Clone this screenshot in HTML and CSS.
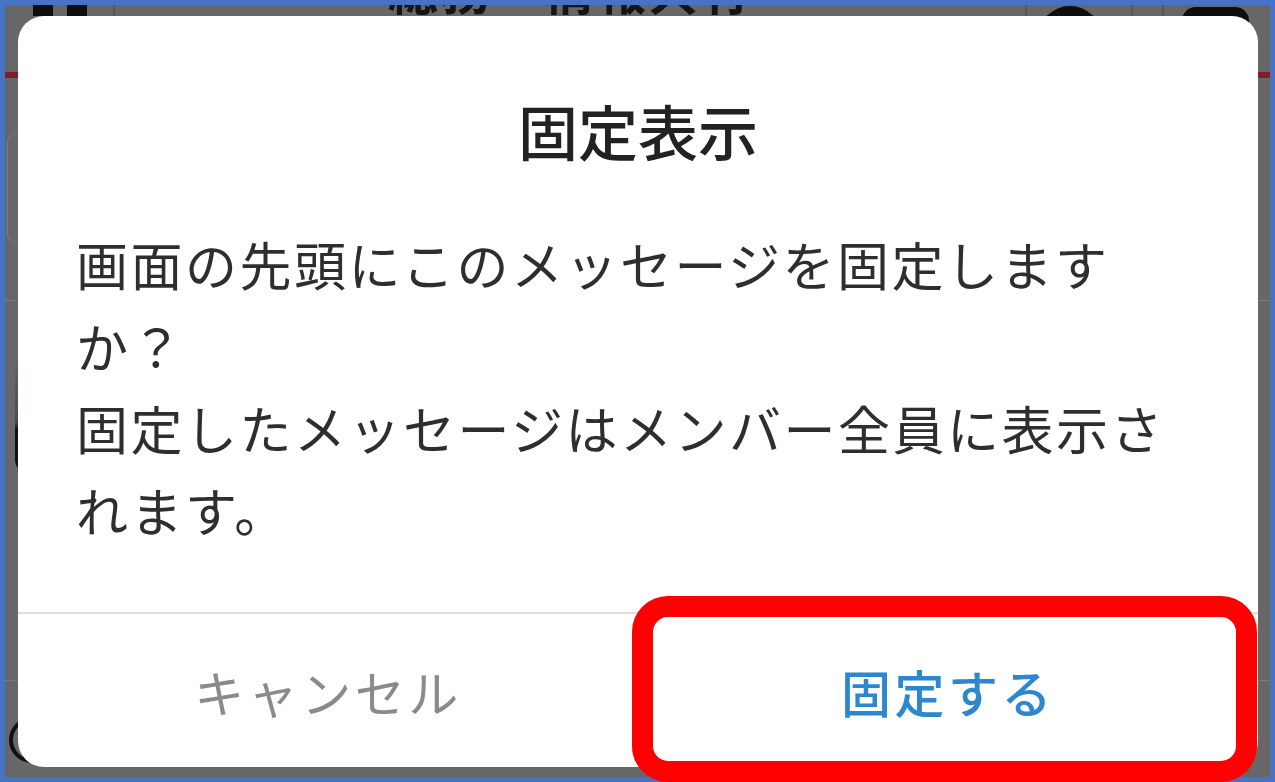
FILE: index.html
```html
<!DOCTYPE html>
<html lang="ja">
<head>
<meta charset="utf-8">
<title>固定表示</title>
<link rel="stylesheet" href="styles.css">
</head>
<body>
<div class="frame">
  <div class="backdrop">
    <div class="bd-icon bd-icon-a"></div>
    <div class="bd-icon bd-icon-b"></div>
    <div class="bd-vline bd-v1"></div>
    <div class="bd-vline bd-v2"></div>
    <div class="bd-vline bd-v3"></div>
    <div class="bd-vline bd-v4"></div>
    <div class="bd-heading">総務・情報共有</div>
    <div class="bd-dome"></div>
    <div class="bd-pill"></div>
    <div class="bd-redline"></div>
    <div class="bd-card"></div>
    <div class="bd-hline bd-h1"></div>
    <div class="bd-hline bd-h2"></div>
    <div class="bd-photo"></div>
    <div class="bd-ring"></div>
  </div>
  <div class="dialog">
    <h2 class="title">固定表示</h2>
    <p class="message">画面の先頭にこのメッセージを固定しますか？<br>固定したメッセージはメンバー全員に表示されます。</p>
    <div class="actions">
      <button class="btn btn-cancel" type="button">キャンセル</button>
      <button class="btn btn-confirm" type="button">固定する</button>
    </div>
  </div>
  <div class="highlight"></div>
</div>
</body>
</html>
```
FILE: styles.css
```css
* { box-sizing: border-box; }
html, body { margin: 0; padding: 0; }
body {
  width: 1275px;
  height: 782px;
  overflow: hidden;
  font-family: "Noto Sans CJK JP", "Noto Sans", sans-serif;
  background: #4673c6;
}
.frame {
  position: relative;
  width: 1275px;
  height: 782px;
  border: 5px solid #4673c6;
  background: #676767;
  padding: 11px 12px 10px 13px;
  display: flex;
  flex-direction: column;
}

/* dimmed app behind the dialog */
.backdrop {
  position: absolute;
  inset: 0;
  overflow: hidden;
}
.bd-icon {
  position: absolute;
  top: 0;
  width: 20px;
  height: 11px;
  background: #0e0e0e;
}
.bd-icon-a { left: 28px; }
.bd-icon-b { left: 62px; }
.bd-vline {
  position: absolute;
  top: 0;
  width: 2px;
  height: 11px;
  background: #575757;
}
.bd-v1 { left: 108px; }
.bd-v2 { left: 1020px; }
.bd-v3 { left: 1126px; }
.bd-v4 { left: 1157px; }
.bd-heading {
  position: absolute;
  left: 383px;
  top: -42px;
  font-size: 50px;
  line-height: 50px;
  letter-spacing: 2px;
  color: #151515;
  font-weight: 700;
}
.bd-dome {
  position: absolute;
  left: 1033px;
  top: 1px;
  width: 64px;
  height: 64px;
  border-radius: 50%;
  background: #0e0e0e;
}
.bd-pill {
  position: absolute;
  left: 1177px;
  top: 2px;
  width: 67px;
  height: 30px;
  border-radius: 14px;
  background: #0e0e0e;
}
.bd-redline {
  position: absolute;
  left: 0;
  right: 0;
  top: 67px;
  height: 6px;
  background: #7b1f2a;
}
.bd-card {
  position: absolute;
  left: 2px;
  top: 128px;
  width: 60px;
  height: 110px;
  border: 1px solid #7d7d7d;
  border-radius: 10px;
}
.bd-hline {
  position: absolute;
  left: 0;
  right: 0;
  height: 1px;
  background: #7a7a7a;
}
.bd-h1 { top: 295px; }
.bd-h2 { top: 675px; }
.bd-photo {
  position: absolute;
  left: 10px;
  top: 355px;
  width: 60px;
  height: 112px;
  border-radius: 12px;
  background: linear-gradient(#5c6472 0%, #454d5b 55%, #121212 62%, #121212 100%);
}
.bd-ring {
  position: absolute;
  left: 4px;
  top: 712px;
  width: 46px;
  height: 46px;
  border: 4px solid #111;
  border-radius: 50%;
}

/* dialog */
.dialog {
  position: relative;
  z-index: 1;
  flex: 1;
  background: #ffffff;
  border-radius: 26px;
  display: flex;
  flex-direction: column;
  overflow: hidden;
}
.title {
  margin: 0;
  padding-top: 74px;
  text-align: center;
  font-size: 60px;
  line-height: 80px;
  font-weight: 500;
  color: #222222;
}
.message {
  margin: 53px 0 0;
  padding: 0 60px 0 58px;
  font-size: 52px;
  line-height: 82px;
  letter-spacing: 2.5px;
  color: #2e2e2e;
  font-weight: 400;
}
.actions {
  margin-top: auto;
  height: 155px;
  border-top: 2px solid #dedede;
  display: flex;
}
.btn {
  flex: 1;
  margin: 0;
  padding: 0;
  border: none;
  background: transparent;
  font-family: inherit;
  font-size: 50px;
  line-height: 1;
  letter-spacing: 3.5px;
  display: flex;
  align-items: center;
  justify-content: center;
}
.btn-cancel {
  color: #8a8a8a;
  font-weight: 400;
}
.btn-confirm {
  color: #2d87cf;
  font-weight: 500;
}

/* red annotation box over the confirm button */
.highlight {
  position: absolute;
  z-index: 2;
  left: 627px;
  top: 591px;
  width: 625px;
  height: 186px;
  border: 21px solid #ff0000;
  border-radius: 36px;
  pointer-events: none;
}
```
